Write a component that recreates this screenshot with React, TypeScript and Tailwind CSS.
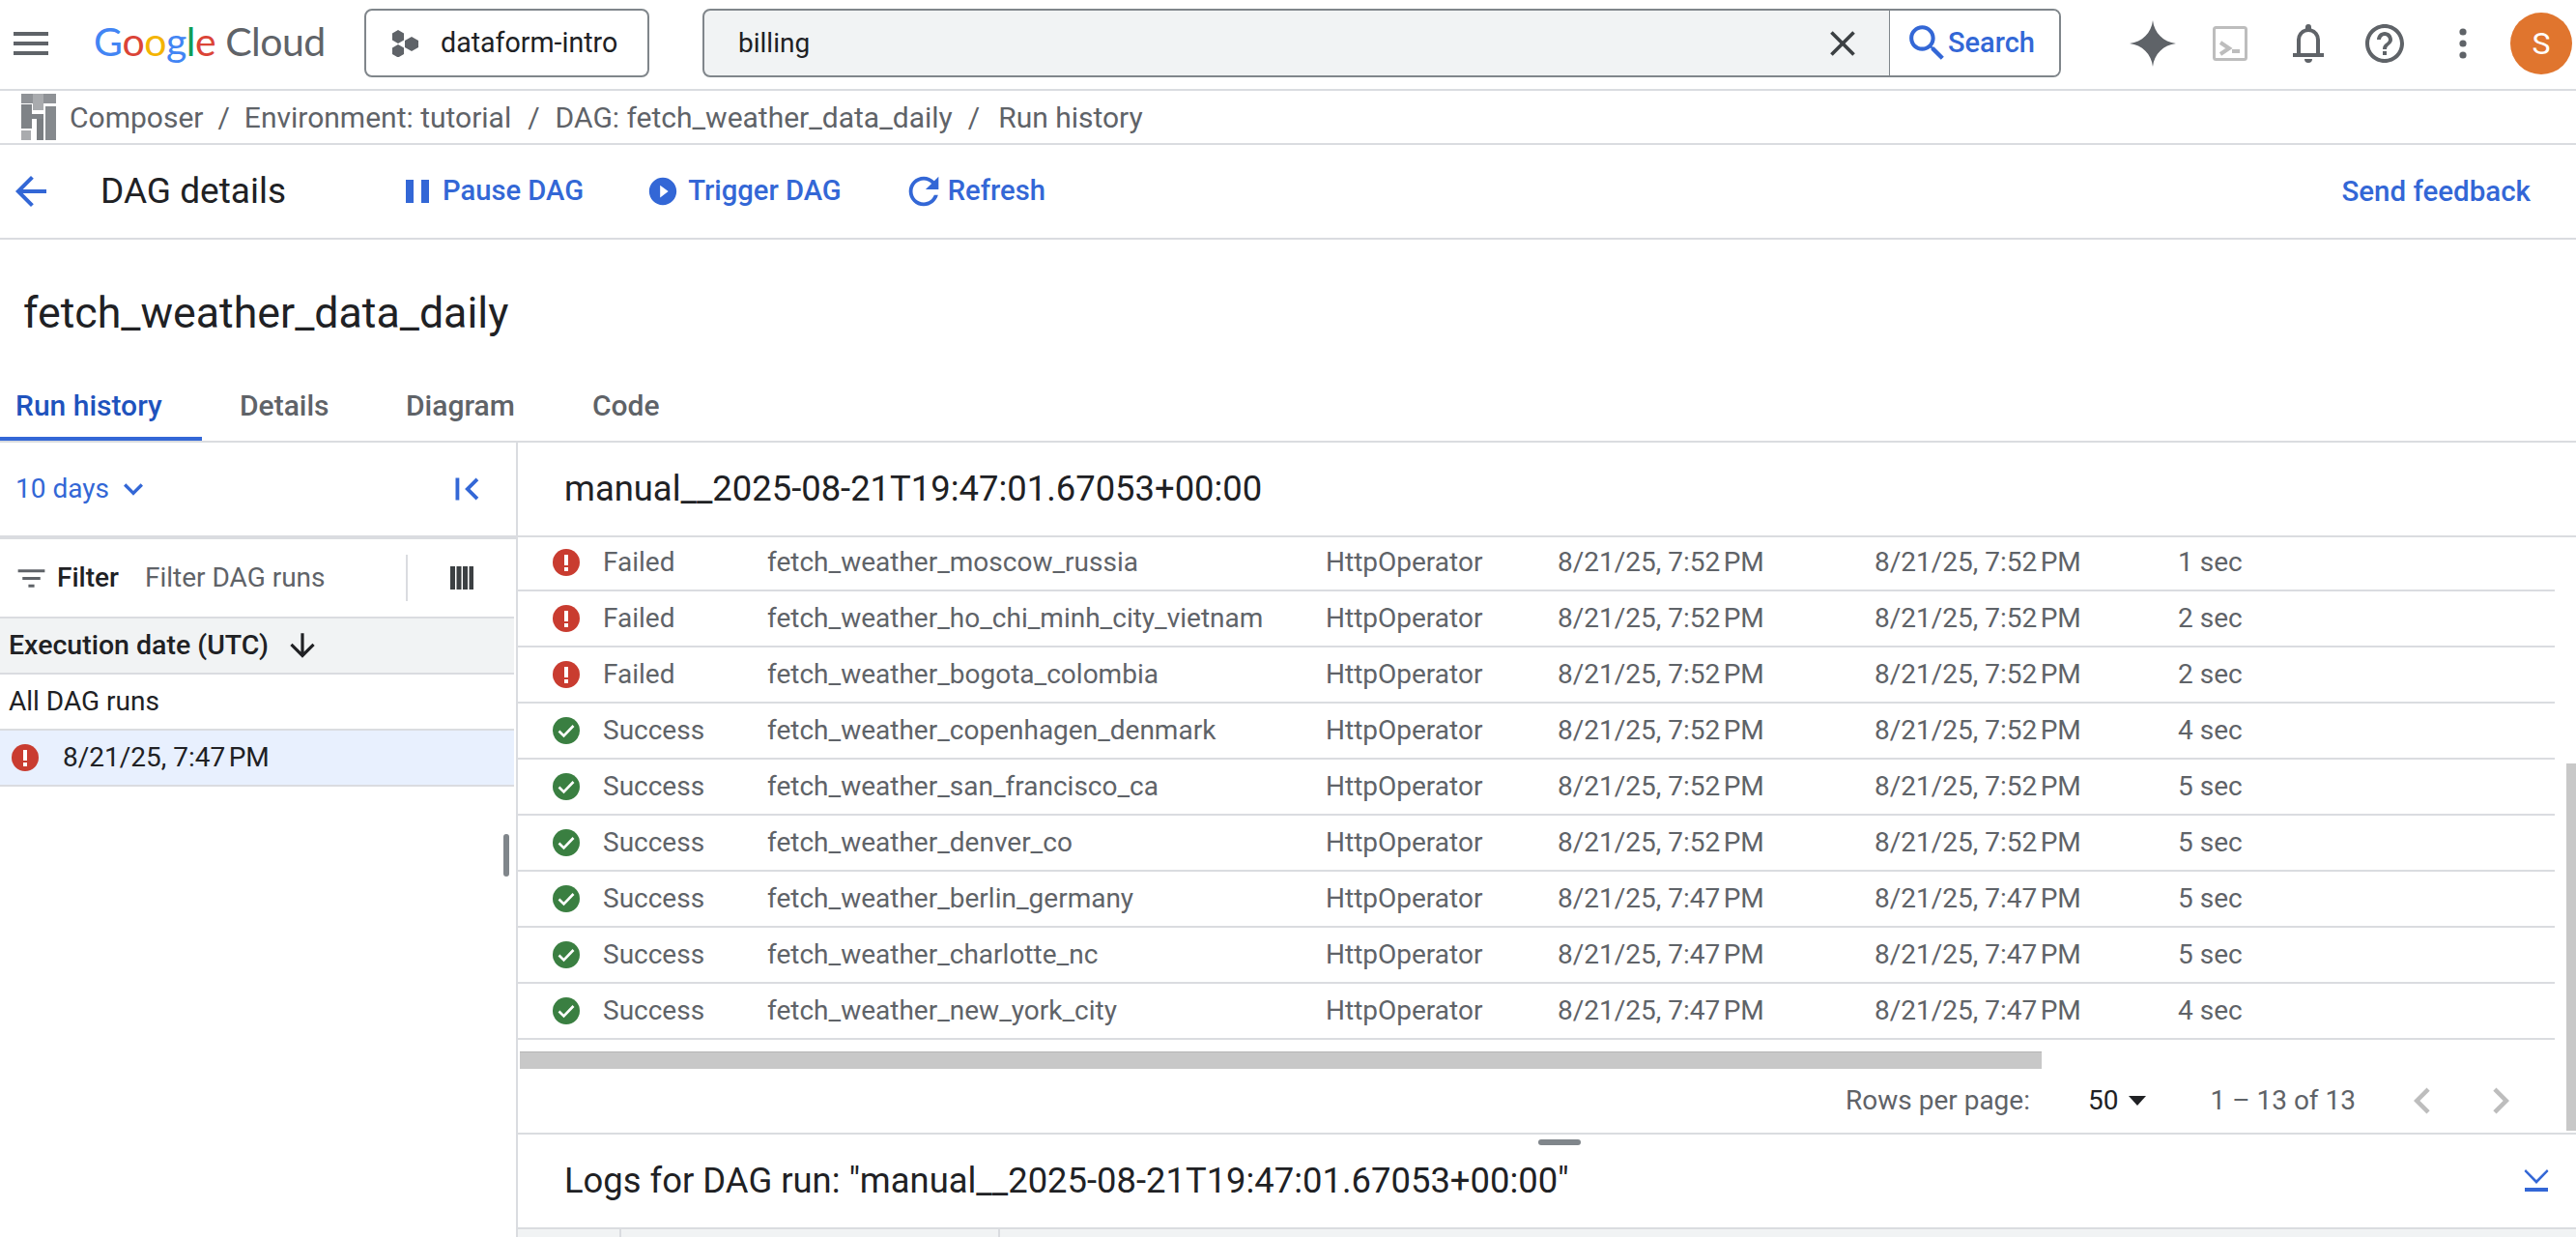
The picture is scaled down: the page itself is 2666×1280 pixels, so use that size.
import React from "react";

const rows = [
  { ok: false, name: "fetch_weather_moscow_russia", start: "7:52", end: "7:52", dur: "1 sec" },
  { ok: false, name: "fetch_weather_ho_chi_minh_city_vietnam", start: "7:52", end: "7:52", dur: "2 sec" },
  { ok: false, name: "fetch_weather_bogota_colombia", start: "7:52", end: "7:52", dur: "2 sec" },
  { ok: true, name: "fetch_weather_copenhagen_denmark", start: "7:52", end: "7:52", dur: "4 sec" },
  { ok: true, name: "fetch_weather_san_francisco_ca", start: "7:52", end: "7:52", dur: "5 sec" },
  { ok: true, name: "fetch_weather_denver_co", start: "7:52", end: "7:52", dur: "5 sec" },
  { ok: true, name: "fetch_weather_berlin_germany", start: "7:47", end: "7:47", dur: "5 sec" },
  { ok: true, name: "fetch_weather_charlotte_nc", start: "7:47", end: "7:47", dur: "5 sec" },
  { ok: true, name: "fetch_weather_new_york_city", start: "7:47", end: "7:47", dur: "4 sec" },
];

function Icon({ d, className }: { d: string; className: string }) {
  return (
    <svg viewBox="0 0 24 24" fill="currentColor" className={className}>
      <path d={d} />
    </svg>
  );
}

function FailedIcon() {
  return (
    <svg viewBox="0 0 28 28" className="w-[28px] h-[28px] shrink-0">
      <circle cx="14" cy="14" r="14" fill="#c93c30" />
      <rect x="12" y="6" width="4" height="11" fill="#fff" />
      <rect x="12" y="19" width="4" height="4" fill="#fff" />
    </svg>
  );
}

function SuccessIcon() {
  return (
    <svg viewBox="0 0 28 28" className="w-[28px] h-[28px] shrink-0">
      <circle cx="14" cy="14" r="14" fill="#3a7f41" />
      <path d="M6.5 14.5l5 5L21.5 9" fill="none" stroke="#fff" strokeWidth="2.6" />
    </svg>
  );
}

function ComposerLogo() {
  return (
    <svg viewBox="0 0 36 48" className="w-[36px] h-[48px] shrink-0">
      <rect x="0" y="0" width="36" height="10" fill="#8f9296" />
      <rect x="12" y="0" width="11" height="17" fill="#a9abae" />
      <rect x="0" y="11" width="11" height="25" fill="#7f8387" />
      <rect x="25" y="13" width="11" height="35" fill="#85898d" />
      <rect x="11" y="21" width="12" height="5" fill="#7f8387" />
      <rect x="16" y="26" width="7" height="22" fill="#7a7e82" />
      <rect x="0" y="38" width="10" height="10" fill="#a9abae" />
    </svg>
  );
}

const dateText = (t: string) => `8/21/25, ${t}\u202fPM`;

export default function App() {
  return (
    <div className="w-[2666px] h-[1280px] overflow-hidden bg-white flex flex-col relative font-['Roboto',sans-serif] text-[28px] text-[#5f6368]">
      {/* Top bar */}
      <div className="h-[94px] shrink-0 border-b-2 border-[#dadce0] flex items-center pb-[3px]">
        <Icon d="M3 18h18v-2H3v2zm0-5h18v-2H3v2zm0-7v2h18V6H3z" className="w-[48px] h-[48px] ml-[8px] text-[#5f6368]" />
        <div className="ml-[41px] w-[280px] flex items-baseline text-[41px] tracking-[-0.5px] leading-none font-['Lato',sans-serif] -mt-[4px]">
          <span className="text-[#4285f4]">G</span>
          <span className="text-[#db4437]">o</span>
          <span className="text-[#f4b400]">o</span>
          <span className="text-[#4285f4]">g</span>
          <span className="text-[#0f9d58]">l</span>
          <span className="text-[#db4437]">e</span>
          <span className="ml-[10px] text-[#5f6368]">Cloud</span>
        </div>
        <div className="w-[295px] h-[71px] border-2 border-[#80868b] rounded-[8px] flex items-center pl-[27px] gap-[22px] text-[#202124] text-[28.6px]">
          <svg viewBox="0 0 28 28" className="w-[28px] h-[28px] shrink-0" fill="#5f6368">
            <path d="M6 0l6 3.5v7L6 14 0 10.500v-7zM6 15l6 3.500v6.500L6 28.500 0 25v-6.500zM20 7l7 4v7l-7 4-7-4v-7z" />
          </svg>
          <span>dataform-intro</span>
        </div>
        <div className="ml-[55px] w-[1406px] h-[71px] border-2 border-[#80868b] rounded-[8px] flex items-center bg-[#f1f3f4] overflow-hidden text-[#202124]">
          <span className="ml-[35px] flex-1">billing</span>
          <Icon d="M19 6.410L17.590 5 12 10.590 6.410 5 5 6.410 10.590 12 5 17.590 6.410 19 12 13.410 17.590 19 19 17.590 13.410 12z" className="w-[44px] h-[44px] mr-[26px] text-[#3c4043]" />
          <div className="w-[176px] h-full bg-white border-l border-[#80868b] flex items-center pl-[14px] text-[#3367d6] font-medium text-[29px]">
            <Icon d="M15.500 14h-.790l-.280-.270C15.410 12.590 16 11.110 16 9.500 16 5.910 13.090 3 9.500 3S3 5.910 3 9.500 5.910 16 9.500 16c1.610 0 3.090-.590 4.230-1.570l.270.280v.790l5 4.990L20.490 19l-4.990-5zm-6 0C7.010 14 5 11.990 5 9.500S7.010 5 9.500 5 14 7.010 14 9.500 11.990 14 9.500 14z" className="w-[49px] h-[49px] shrink-0" />
            <span className="-ml-[3px]">Search</span>
          </div>
        </div>
        <svg viewBox="0 0 24 24" className="w-[48px] h-[48px] ml-[71px] shrink-0" fill="#5f6368">
          <path d="M12 0C12.700 6.500 17.500 11.300 24 12 17.500 12.700 12.700 17.500 12 24 11.300 17.500 6.500 12.700 0 12 6.500 11.300 11.300 6.500 12 0z" />
        </svg>
        <svg viewBox="0 0 36 36" className="w-[36px] h-[36px] ml-[38px] shrink-0" fill="none">
          <rect x="1.500" y="1.500" width="33" height="33" rx="2" stroke="#bdbdbd" strokeWidth="3" />
          <path d="M8 17l9 6-9 6" stroke="#bdbdbd" strokeWidth="4" />
          <rect x="20" y="24" width="8" height="4" fill="#bdbdbd" />
        </svg>
        <Icon d="M4 19v-2h2v-7a6 6 0 0 1 4.500-5.800V3.500a1.500 1.500 0 0 1 3 0v.700A6 6 0 0 1 18 10v7h2v2H4zm4-2h8v-7a4 4 0 0 0-8 0v7zm2 3h4a2 2 0 0 1-4 0z" className="w-[48px] h-[48px] ml-[39px] shrink-0 text-[#5f6368]" />
        <Icon d="M11 18h2v-2h-2v2zm1-16C6.480 2 2 6.480 2 12s4.480 10 10 10 10-4.480 10-10S17.520 2 12 2zm0 18c-4.410 0-8-3.590-8-8s3.590-8 8-8 8 3.590 8 8-3.590 8-8 8zm0-14c-2.210 0-4 1.790-4 4h2c0-1.100.9-2 2-2s2 .9 2 2c0 2-3 1.750-3 5h2c0-2.250 3-2.500 3-5 0-2.210-1.790-4-4-4z" className="w-[48px] h-[48px] ml-[31px] shrink-0 text-[#5f6368]" />
        <svg viewBox="0 0 8 32" className="w-[8px] h-[32px] ml-[53px] shrink-0" fill="#5f6368">
          <circle cx="4" cy="4" r="3.600" />
          <circle cx="4" cy="16" r="3.600" />
          <circle cx="4" cy="28" r="3.600" />
        </svg>
        <div className="w-[64px] h-[64px] ml-[45px] shrink-0 rounded-full bg-[#e0752e] flex items-center justify-center text-white text-[32px]">S</div>
      </div>

      {/* Breadcrumb */}
      <div className="h-[56px] shrink-0 border-b-2 border-[#dadce0] flex items-center pl-[22px] text-[30px]">
        <ComposerLogo />
        <span className="ml-[14px]">Composer</span>
        <span className="mx-[15px]">/</span>
        <span>Environment: tutorial</span>
        <span className="ml-[17px] mr-[16px]">/</span>
        <span>DAG: fetch_weather_data_daily</span>
        <span className="ml-[16px] mr-[19px]">/</span>
        <span>Run history</span>
      </div>

      {/* Action bar */}
      <div className="h-[98px] shrink-0 border-b-2 border-[#dadce0] flex items-center text-[#3367d6] font-medium text-[29.2px]">
        <Icon d="M20 11H7.830l5.590-5.590L12 4l-8 8 8 8 1.410-1.410L7.830 13H20v-2z" className="w-[48px] h-[48px] ml-[8px] shrink-0" />
        <span className="ml-[48px] w-[316px] text-[37px] font-normal text-[#202124]">DAG details</span>
        <svg viewBox="0 0 24 24" className="w-[24px] h-[24px] shrink-0" fill="currentColor">
          <rect x="0" y="0" width="8" height="24" />
          <rect x="16" y="0" width="8" height="24" />
        </svg>
        <span className="ml-[14px]">Pause DAG</span>
        <Icon d="M12 2C6.480 2 2 6.480 2 12s4.480 10 10 10 10-4.480 10-10S17.520 2 12 2zm-2 14.500v-9l6 4.500-6 4.500z" className="w-[34px] h-[34px] ml-[65px] shrink-0" />
        <span className="ml-[9px]">Trigger DAG</span>
        <Icon d="M17.650 6.350C16.200 4.900 14.210 4 12 4c-4.420 0-7.990 3.580-7.990 8s3.570 8 7.990 8c3.730 0 6.840-2.550 7.730-6h-2.080c-.820 2.330-3.040 4-5.650 4-3.310 0-6-2.690-6-6s2.690-6 6-6c1.660 0 3.140.690 4.220 1.780L13 11h7V4l-2.350 2.350z" className="w-[46px] h-[46px] ml-[62px] shrink-0" />
        <span className="ml-[2px]">Refresh</span>
        <span className="ml-auto mr-[47px] text-[29.5px]">Send feedback</span>
      </div>

      {/* Title */}
      <div className="h-[130px] shrink-0 flex items-center pl-[24px] pt-[24px] text-[44.7px] text-[#202124]">fetch_weather_data_daily</div>

      {/* Tabs */}
      <div className="h-[80px] shrink-0 border-b-2 border-[#dadce0] flex font-medium text-[30px]">
        <div className="w-[209px] border-b-4 border-[#3367d6] pl-[16px] pt-[19px] text-[#1f53bd]">Run history</div>
        <div className="ml-[39px] w-[172px] pt-[19px]">Details</div>
        <div className="w-[193px] pt-[19px]">Diagram</div>
        <div className="pt-[19px]">Code</div>
      </div>

      {/* Content */}
      <div className="flex-1 min-h-0 flex">
        {/* Left panel */}
        <div className="w-[536px] shrink-0 border-r-2 border-[#dadce0] relative flex flex-col text-[#202124]">
          <div className="h-[100px] shrink-0 border-b-4 border-[#dadce0] flex items-center pl-[16px] text-[#3367d6]">
            <span>10 days</span>
            <Icon d="M16.590 8.590L12 13.170 7.410 8.590 6 10l6 6 6-6z" className="w-[40px] h-[40px] ml-[5px]" />
            <Icon d="M18.410 16.590L13.820 12l4.590-4.590L17 6l-6 6 6 6zM6 6h2v12H6z" className="w-[46px] h-[46px] ml-auto mr-[28px]" />
          </div>
          <div className="h-[82px] shrink-0 mr-[2px] border-b-2 border-[#dadce0] flex items-center">
            <Icon d="M10 18h4v-2h-4v2zM3 6v2h18V6H3zm3 7h12v-2H6v2z" className="w-[37px] h-[37px] ml-[14px] shrink-0 text-[#5f6368]" />
            <span className="ml-[8px] font-medium">Filter</span>
            <span className="ml-[27px] text-[#5f6368]">Filter DAG runs</span>
            <div className="ml-auto w-[2px] h-[48px] bg-[#dadce0]"></div>
            <svg viewBox="0 0 24 24" className="w-[24px] h-[24px] ml-[44px] mr-[42px] shrink-0" fill="#3c4043">
              <rect x="0" y="0" width="5" height="24" />
              <rect x="6.500" y="0" width="5" height="24" />
              <rect x="13" y="0" width="5" height="24" />
              <rect x="19.500" y="0" width="4.500" height="24" />
            </svg>
          </div>
          <div className="h-[58px] shrink-0 mr-[2px] border-b-2 border-[#dadce0] bg-[#f1f3f4] flex items-center pl-[9px] font-medium text-[28.5px]">
            <span>Execution date (UTC)</span>
            <Icon d="M20 12l-1.410-1.410L13 16.170V4h-2v12.170l-5.580-5.590L4 12l8 8 8-8z" className="w-[38px] h-[38px] ml-[16px]" />
          </div>
          <div className="h-[58px] shrink-0 mr-[2px] border-b-2 border-[#dadce0] flex items-center pl-[9px]">All DAG runs</div>
          <div className="h-[58px] shrink-0 mr-[2px] border-b-2 border-[#dadce0] bg-[#e8f0fe] flex items-center pl-[12px] gap-[25px]">
            <FailedIcon />
            <span>{dateText("7:47")}</span>
          </div>
          {/* splitter handle */}
          <div className="absolute left-[521px] top-[405px] w-[6px] h-[44px] rounded-full bg-[#80868b]"></div>
        </div>

        {/* Right panel */}
        <div className="flex-1 min-w-0 relative flex flex-col">
          <div className="h-[96px] shrink-0 flex items-center pl-[48px] text-[36.4px] text-[#202124]">manual__2025-08-21T19:47:01.67053+00:00</div>
          <div className="shrink-0 border-t-2 border-[#dadce0] -mb-[2px]"></div>
          {rows.map((r) => (
            <div key={r.name} className="h-[58px] shrink-0 mr-[22px] border-b-2 border-[#dadce0] flex items-center pl-[36px]">
              <div className="w-[52px] shrink-0">{r.ok ? <SuccessIcon /> : <FailedIcon />}</div>
              <span className="w-[170px] shrink-0">{r.ok ? "Success" : "Failed"}</span>
              <span className="w-[578px] shrink-0">{r.name}</span>
              <span className="w-[240px] shrink-0">HttpOperator</span>
              <span className="w-[328px] shrink-0">{dateText(r.start)}</span>
              <span className="w-[314px] shrink-0">{dateText(r.end)}</span>
              <span>{r.dur}</span>
            </div>
          ))}
          <div className="mt-[12px] ml-[2px] h-[18px] w-[1575px] shrink-0 bg-[#c8c8c8] border-t border-[#b4b4b4]"></div>
          <div className="flex-1 flex items-center min-h-0">
            <span className="ml-[1374px] w-[251px]">Rows per page:</span>
            <span className="text-[#202124]">50</span>
            <svg viewBox="0 0 18 10" className="w-[18px] h-[10px] ml-[11px]" fill="#202124">
              <path d="M0 0h18L9 10z" />
            </svg>
            <span className="ml-[66px] w-[193px]">1 – 13 of 13</span>
            <Icon d="M15.410 16.590L10.830 12l4.580-4.590L14 6l-6 6 6 6 1.410-1.410z" className="w-[54px] h-[54px] text-[#bdbdbd]" />
            <Icon d="M8.590 16.590L13.170 12 8.590 7.410 10 6l6 6-6 6-1.410-1.410z" className="w-[54px] h-[54px] ml-[27px] text-[#bdbdbd]" />
          </div>
          <div className="h-[100px] shrink-0 border-t-2 border-b-2 border-[#dadce0] flex items-center pl-[48px] text-[36.4px] text-[#202124]">
            <span>Logs for DAG run: "manual__2025-08-21T19:47:01.67053+00:00"</span>
            <svg viewBox="0 0 26 26" className="w-[26px] h-[26px] ml-auto mr-[28px] text-[#3367d6] -mt-[2px]" fill="currentColor">
              <path d="M2 2l11 11L24 2l1.500 2L13 17 .5 4z" />
              <rect x="1" y="21" width="24" height="4" />
            </svg>
          </div>
          <div className="h-[8px] shrink-0 bg-[#f1f3f4] flex">
            <div className="w-[107px] border-r-2 border-[#dadce0]"></div>
            <div className="w-[392px] border-r-2 border-[#dadce0]"></div>
          </div>

          {/* vertical scrollbar thumb and pane handle */}
          <div className="absolute right-0 top-[332px] w-[10px] h-[380px] bg-[#c8c8c8]"></div>
          <div className="absolute left-[1056px] top-[721px] w-[44px] h-[6px] rounded-full bg-[#80868b]"></div>
        </div>
      </div>
    </div>
  );
}
